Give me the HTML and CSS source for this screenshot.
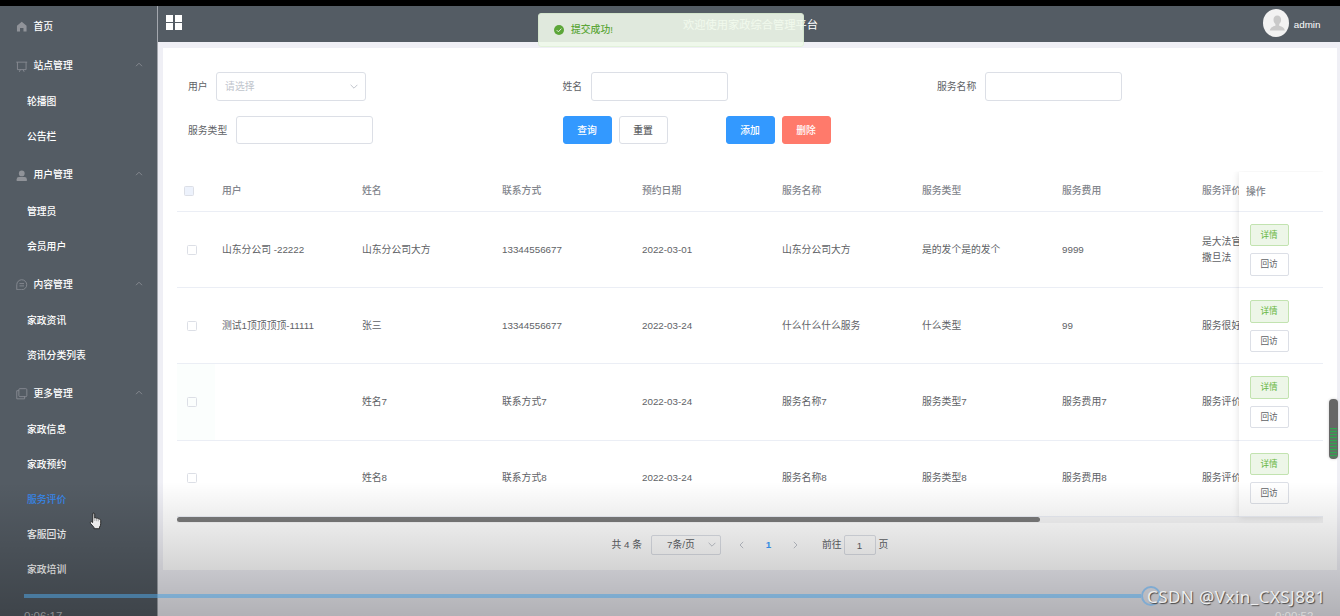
FILE: index.html
```
<!DOCTYPE html>
<html lang="zh-CN">
    <head>
        <meta charset="utf-8">
        <title>家政综合管理平台</title>
        <link rel="stylesheet" href="styles.css">
    </head>
    <body>
        <svg class="defs">
            <symbol id="up" viewBox="0 0 8 5"><path d="M1 4.2 4 1.2 7 4.2"/></symbol>
            <symbol id="down" viewBox="0 0 8 5"><path d="M.6 .8 4 4.2 7.4 .8"/></symbol>
        </svg>
        <div class="app">
            <div class="sidebar">
                <div class="title">
                    <svg class="icon solid" viewBox="0 0 12 12"><path d="M6 .8 11 5v6H7.8V7.2H4.2V11H1V5z"/></svg>首页
                </div>
                <div class="title">
                    <svg class="icon" viewBox="0 0 12 12"><path d="M.3 1.2h11.4M1.5 1.2v7.8h9V1.2M4.5 9l-1 2.3M7.5 9l1 2.3"/></svg>站点管理
                    <svg class="arrow"><use href="#up"/></svg>
                </div>
                <div class="item">轮播图</div>
                <div class="item">公告栏</div>
                <div class="title">
                    <svg class="icon solid" viewBox="0 0 12 12"><circle cx="6" cy="3.6" r="3"/><path d="M.7 11.5V9.6Q.7 7.4 3 7.4h6q2.3 0 2.3 2.2v1.9z"/></svg>用户管理
                    <svg class="arrow"><use href="#up"/></svg>
                </div>
                <div class="item">管理员</div>
                <div class="item">会员用户</div>
                <div class="title">
                    <svg class="icon" viewBox="0 0 12 12"><path d="M.8 11.2V6A5.2 5.2 0 1 1 6 11.2zM3.6 4.8h4.8M3.6 7.2h4.8"/></svg>内容管理
                    <svg class="arrow"><use href="#up"/></svg>
                </div>
                <div class="item">家政资讯</div>
                <div class="item">资讯分类列表</div>
                <div class="title">
                    <svg class="icon" viewBox="0 0 12 12"><rect x="3" y=".7" width="8.3" height="8.3" rx="1"/><path d="M3 2.8H.8v8.5H9V9"/></svg>更多管理
                    <svg class="arrow"><use href="#up"/></svg>
                </div>
                <div class="item">家政信息</div>
                <div class="item">家政预约</div>
                <div class="item active">服务评价</div>
                <div class="item">客服回访</div>
                <div class="item">家政培训</div>
            </div>
            <div class="main">
                <div class="header">
                    <div class="grid-icon"><i></i><i></i><i></i><i></i></div>
                    <div class="welcome">欢迎使用家政综合管理平台</div>
                    <div class="user">
                        <svg class="avatar" viewBox="0 0 26 28" preserveAspectRatio="none">
                            <ellipse cx="13" cy="14" rx="13" ry="14" fill="#f2f2f2"/>
                            <path d="M14.3 6.5c-2.4 0-3.8 1.7-3.8 4.2 0 2 .8 3.4 1.9 4.4v1.7c-3.2.9-5.4 2-5.6 4.7h15c-.2-2.7-2.4-3.8-5.6-4.7v-1.7c1.1-1 1.9-2.4 1.9-4.4 0-2.5-1.4-4.2-3.8-4.2z" fill="#c9c9c9"/>
                        </svg>
                        admin
                    </div>
                </div>
                <div class="card">
                    <div class="form">
                        <div class="field"><span>用户</span><div class="input select"><span>请选择</span><svg class="caret"><use href="#down"/></svg></div></div>
                        <div class="field"><span>姓名</span><div class="input"></div></div>
                        <div class="field"><span>服务名称</span><div class="input"></div></div>
                        <div class="field"><span>服务类型</span><div class="input"></div></div>
                        <div class="field buttons">
                            <div class="btn primary">查询</div>
                            <div class="btn">重置</div>
                            <div class="btn primary add">添加</div>
                            <div class="btn danger">删除</div>
                        </div>
                    </div>
                    <div class="table">
                        <div class="scroll">
                            <table>
                                <thead>
                                    <tr><th class="check"><i class="box disabled"></i></th><th>用户</th><th>姓名</th><th>联系方式</th><th>预约日期</th><th>服务名称</th><th>服务类型</th><th>服务费用</th><th>服务评价</th></tr>
                                </thead>
                                <tbody>
                                    <tr><td class="check"><i class="box"></i></td><td>山东分公司 -22222</td><td>山东分公司大方</td><td>13344556677</td><td>2022-03-01</td><td>山东分公司大方</td><td>是的发个是的发个</td><td>9999</td><td>是大法官<br>撒旦法</td></tr>
                                    <tr><td class="check"><i class="box"></i></td><td>测试1顶顶顶顶-11111</td><td>张三</td><td>13344556677</td><td>2022-03-24</td><td>什么什么什么服务</td><td>什么类型</td><td>99</td><td>服务很好</td></tr>
                                    <tr><td class="check hover"><i class="box"></i></td><td></td><td>姓名7</td><td>联系方式7</td><td>2022-03-24</td><td>服务名称7</td><td>服务类型7</td><td>服务费用7</td><td>服务评价</td></tr>
                                    <tr><td class="check"><i class="box"></i></td><td></td><td>姓名8</td><td>联系方式8</td><td>2022-03-24</td><td>服务名称8</td><td>服务类型8</td><td>服务费用8</td><td>服务评价</td></tr>
                                </tbody>
                            </table>
                        </div>
                        <div class="fixed">
                            <div class="fixed-head">操作</div>
                            <div class="ops"><div class="mini success">详情</div><div class="mini">回访</div></div>
                            <div class="ops"><div class="mini success">详情</div><div class="mini">回访</div></div>
                            <div class="ops"><div class="mini success">详情</div><div class="mini">回访</div></div>
                            <div class="ops"><div class="mini success">详情</div><div class="mini">回访</div></div>
                        </div>
                    </div>
                    <div class="track"><div class="thumb"></div></div>
                    <div class="pagination">
                        <span>共 4 条</span>
                        <div class="page-size">7条/页<svg class="caret"><use href="#down"/></svg></div>
                        <svg class="nav" viewBox="0 0 5 8"><path d="M4.2 .8 1 4l3.2 3.2"/></svg>
                        <b>1</b>
                        <svg class="nav next" viewBox="0 0 5 8"><path d="M.8 .8 4 4 .8 7.2"/></svg>
                        <span>前往</span>
                        <div class="jump">1</div>
                        <span>页</span>
                    </div>
                </div>
            </div>
        </div>

        <div class="message">
            <svg viewBox="0 0 10 10"><circle cx="5" cy="5" r="5" fill="#5daf34"/><path d="M2.7 5.1 4.4 6.8 7.4 3.6" fill="none" stroke="#f0f9eb"/></svg>提交成功!
        </div>
        <div class="gauge"><div class="level"></div></div>
        <svg class="cursor" viewBox="0 0 13 18">
            <path d="M4 1.2q1.2-.7 1.7.6V6q1-.6 1.7.3 1-.5 1.7.4 1.1-.4 1.7.7.9 0 .9 1.2v3.2q0 2-1.2 3.3v1.6H5v-1.3L1.4 11.3q-.6-1.3.6-1.7.7-.1 1.6 1z" fill="#fff" stroke="#222" stroke-width=".9"/>
            <path d="M5.8 6v3M7.6 6.5v2.7M9.3 7v2.4" stroke="#777" stroke-width=".5"/>
        </svg>

        <!-- video player controls -->
        <div class="shade"></div>
        <div class="progress"></div>
        <div class="knob"></div>
        <div class="time">0:06:17</div>
        <div class="time left">0:00:52</div>
        <div class="watermark">CSDN @Vxin_CXSJ881</div>
    </body>
</html>
```
FILE: styles.css
```
*{
    box-sizing: border-box;
}
body{
    margin: 0;
    height: 616px;
    overflow: hidden;
    position: relative;
    background: #efeff5;
    border-top: 6px solid #000;
    color: #606266;
    font: 9.8px/16px "Liberation Sans", "Noto Sans CJK SC", sans-serif;
}
svg{
    fill: none;
    stroke: #c0c4cc;
    display: block;
}
.defs{
    position: absolute;
    width: 0;
    height: 0;
}
.app{
    display: flex;
    height: 610px;
}

/* sidebar */
.sidebar{
    width: 157.5px;
    background: #545c64;
    border-right: 1px solid #a3a7ae;
    color: #fff;
    padding-top: 1px;
    flex: none;
    font-weight: 500;
}
.title{
    display: flex;
    align-items: center;
    height: 39.2px;
    padding: 1px 14px 0 16px;
}
.item{
    height: 35px;
    line-height: 34px;
    padding-left: 27px;
}
.active{
    color: #3788ee;
}
.icon{
    width: 11.5px;
    height: 11.5px;
    margin-right: 6px;
    stroke: #8a8e95;
    stroke-width: .9;
}
.solid{
    fill: #909399;
    stroke: none;
}
.arrow{
    width: 8px;
    height: 5px;
    margin: 0 0 3px auto;
    stroke: #909399;
    stroke-width: .8;
}

.main{
    flex: 1;
    min-width: 0;
}
.header{
    display: flex;
    align-items: center;
    height: 36px;
    background: #545c64;
    color: #fff;
    padding: 0 19.5px 0 8.5px;
}
.grid-icon{
    display: grid;
    grid-template-columns: 7px 7px;
    gap: 1.6px;
    margin-bottom: 3px;
}
.grid-icon i{
    height: 6.6px;
    background: #fff;
}
.welcome{
    font-size: 11.25px;
    margin-left: 501.5px;
    padding-top: 1px;
}
.user{
    display: flex;
    align-items: center;
    gap: 5px;
    margin-left: auto;
    padding-top: 1px;
}
.avatar{
    width: 26px;
    height: 28px;
    margin-top: -3px;
    stroke: none;
}

.card{
    margin: 6px 3px 0 5.5px;
    height: 522px;
    background: #fff;
    padding: 24px 14px 0;
}
.form{
    display: grid;
    grid-template-columns: repeat(3, 374.5px);
    row-gap: 15px;
    padding-left: 11px;
}
.field{
    display: flex;
    align-items: center;
    gap: 8.5px;
    height: 28.5px;
}
.field span{
    padding-top: 1.5px;
}
.input{
    width: 137.5px;
    height: 28.5px;
    border: 1px solid #dcdfe6;
    border-radius: 3px;
}
.select{
    display: flex;
    align-items: center;
    justify-content: space-between;
    width: 150px;
    padding: 0 7px 0 8px;
    color: #c0c4cc;
}
.caret{
    width: 8px;
    height: 5px;
}
.buttons{
    gap: 7px;
}
.btn{
    width: 49px;
    height: 28px;
    line-height: 27px;
    text-align: center;
    border: 1px solid #dcdfe6;
    border-radius: 3px;
    font-weight: 500;
}
.primary{
    background: #3399ff;
    border-color: #3399ff;
    color: #fff;
}
.danger{
    background: #ff7a6b;
    border-color: #ff7a6b;
    color: #fff;
}
.add{
    margin-left: 51px;
}

/* table */
.table{
    display: flex;
    margin-top: 27.5px;
}
.scroll{
    width: 1062px;
    overflow: hidden;
}
table{
    table-layout: fixed;
    width: 1158px;
    border-collapse: separate;
    border-spacing: 0;
}
th, td{
    height: 76.2px;
    padding: 0 7px;
    border-bottom: 1px solid #ebeef5;
    text-align: left;
    vertical-align: middle;
}
th{
    height: 40.5px;
    color: #82858c;
    font-weight: 500;
}
.check{
    width: 38px;
    padding-left: 10px;
}
th.check{
    padding-left: 7px;
}
.hover{
    background: #fbfefd;
}
.box{
    display: block;
    width: 10px;
    height: 10px;
    border: 1px solid #dcdfe6;
    border-radius: 1.5px;
}
.disabled{
    background: #edf2fc;
}
.fixed{
    flex: 1;
    background: #fff;
    box-shadow: 0 0 7px rgba(0, 0, 0, .13);
    clip-path: inset(0 0 -8px -8px);
}
.fixed-head{
    height: 40.5px;
    line-height: 40px;
    padding-left: 7px;
    color: #82858c;
    font-weight: 500;
    border-bottom: 1px solid #ebeef5;
}
.ops{
    display: flex;
    flex-direction: column;
    gap: 7px;
    height: 76.2px;
    padding: 12px 0 0 10.5px;
    border-bottom: 1px solid #ebeef5;
}
.mini{
    width: 39px;
    height: 22.4px;
    line-height: 20.4px;
    text-align: center;
    font-size: 8.6px;
    border: 1px solid #dcdfe6;
    border-radius: 2px;
}
.success{
    background: #edf6e8;
    border-color: #c2e3b0;
    color: #67b742;
}
.track{
    height: 6px;
    background: #f5f5f6;
}
.thumb{
    width: 863px;
    height: 5.5px;
    border-radius: 3px;
    background: #7b7b7b;
}

.pagination{
    display: flex;
    align-items: center;
    height: 20px;
    margin-top: 12px;
    padding-left: 434.5px;
}
.page-size{
    display: flex;
    align-items: center;
    justify-content: space-between;
    width: 70px;
    height: 20px;
    margin: 0 18px 0 9px;
    padding: 0 4px 0 15px;
    border: 1px solid #dcdfe6;
    border-radius: 2px;
}
.nav{
    width: 5px;
    height: 8px;
}
.pagination b{
    width: 49px;
    text-align: center;
    color: #409eff;
}
.next{
    margin-right: 24px;
}
.jump{
    width: 32px;
    height: 20px;
    line-height: 19px;
    margin: 0 3px 0 2px;
    text-align: center;
    border: 1px solid #dcdfe6;
    border-radius: 2px;
}

/* overlays */
.message{
    position: absolute;
    left: 538px;
    top: 7px;
    display: flex;
    align-items: center;
    width: 266px;
    height: 34px;
    padding-left: 15px;
    background: #f0f9eb;
    border: 1px solid #e1f3d8;
    border-radius: 3px;
    color: #5daf34;
    opacity: .9;
    font-weight: 500;
}
.message svg{
    width: 10px;
    height: 10px;
    margin-right: 7px;
    stroke: none;
}
.gauge{
    position: absolute;
    left: 1329px;
    top: 393px;
    width: 9px;
    height: 60px;
    padding: 29px 1px 0;
    border-radius: 4px;
    background: #666;
    box-shadow: 0 0 3px rgba(0, 0, 0, .2);
}
.level{
    height: 30px;
    background: repeating-linear-gradient(#2fa84f 0 1px, #5c7563 1px 3px);
}
.cursor{
    position: absolute;
    left: 89px;
    top: 506px;
    width: 13px;
    height: 18px;
}
.shade{
    position: absolute;
    left: 0;
    right: 0;
    bottom: 0;
    height: 134px;
    background: linear-gradient(rgba(0, 0, 0, 0), rgba(0, 0, 0, .26));
}
.progress{
    position: absolute;
    left: 24px;
    top: 588px;
    width: 1117px;
    height: 4px;
    background: rgba(80, 160, 220, .57);
}
.knob{
    position: absolute;
    left: 1141px;
    top: 579.5px;
    width: 20px;
    height: 20px;
    border: 2px solid #7fabd2;
    border-radius: 50%;
}
.time{
    position: absolute;
    left: 24px;
    top: 602px;
    font-size: 11.5px;
    color: #8b8e91;
}
.left{
    left: 1275px;
    color: #d8d8d8;
}
.watermark{
    position: absolute;
    left: 1147px;
    top: 579px;
    font: 17px/24px "Noto Sans", sans-serif;
    letter-spacing: .45px;
    color: #eee;
    white-space: nowrap;
    text-shadow: 1px 1px 1px #444;
}
```
